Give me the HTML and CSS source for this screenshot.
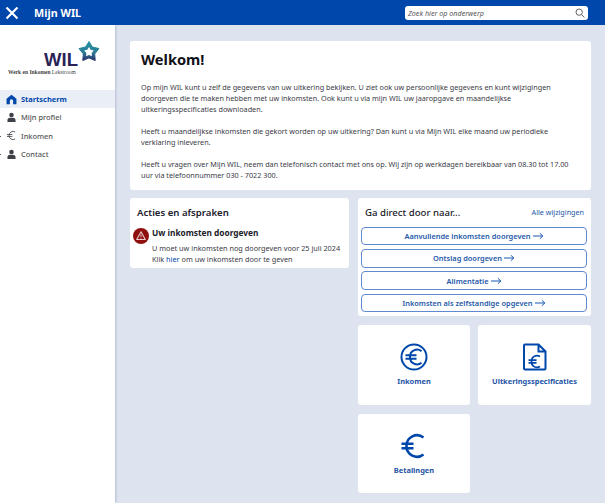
FILE: index.html
```html
<!DOCTYPE html>
<html lang="nl">
<head>
<meta charset="utf-8">
<title>Mijn WIL</title>
<link rel="stylesheet" href="styles.css">
</head>
<body>
<header class="topbar">
  <svg class="close" viewBox="0 0 14 14"><path d="M1.500 1.500l11 11M12.500 1.500l-11 11"/></svg>
  <span class="app-title">Mijn WIL</span>
  <div class="search">
    <span class="search-text">Zoek hier op onderwerp</span>
    <svg class="search-icon" viewBox="0 0 12 12"><circle cx="5" cy="5" r="3.800"/><path d="M7.800 7.800l3.400 3.400"/></svg>
  </div>
</header>
<div class="shell">
  <aside class="sidebar">
    <div class="logo">
      <div class="logo-top">
        <span class="logo-wil">WIL</span>
        <svg class="logo-star" viewBox="0 0 22 22">
          <defs><linearGradient id="star" x1="0" y1="0" x2="0" y2="1"><stop offset="0" stop-color="#1f8fa0"/><stop offset=".55" stop-color="#2a7f96"/><stop offset="1" stop-color="#2a2f6e"/></linearGradient></defs>
          <path fill="url(#star)" stroke="url(#star)" stroke-linejoin="round" d="M11 1.500l3.300 5.400 6.700 1.700-4.300 5.300.5 6.600-6.200-2.600-6.200 2.600.5-6.600L1 8.600l6.700-1.700z"/>
          <path fill="#fff" d="M11 7l1.700 2.700 3.100.9-2.100 2.400.2 3.200-2.900-1.200-2.900 1.200.2-3.200-2.100-2.400 3.100-.9z"/>
        </svg>
      </div>
      <div class="logo-sub"><b>Werk en Inkomen</b> Lekstroom</div>
    </div>
    <nav class="nav">
      <a class="nav-item active">
        <svg class="nav-icon" viewBox="0 0 12 12"><path class="fill-blue" d="M6 .8L.6 5.200v6h3.600V7.600a1.800 1.800 0 0 1 3.600 0v3.600h3.600v-6z"/></svg>Startscherm</a>
      <a class="nav-item">
        <svg class="nav-icon" viewBox="0 0 12 12"><circle class="fill-grey" cx="6" cy="3.200" r="2.500"/><path class="fill-grey" d="M1.600 11V8.600C1.600 7 3 6.300 6 6.300s4.400.7 4.400 2.300V11z"/></svg>Mijn profiel</a>
      <a class="nav-item has-sub">
        <svg class="nav-icon" viewBox="0 0 12 12"><path class="line-grey" d="M10 2.200A4.300 4.300 0 0 0 3.400 6a4.300 4.300 0 0 0 6.600 3.800M1 4.900h6M1 7h6"/></svg>Inkomen</a>
      <a class="nav-item has-sub">
        <svg class="nav-icon" viewBox="0 0 12 12"><circle class="fill-grey" cx="6" cy="3.200" r="2.500"/><path class="fill-grey" d="M1.600 11V8.600C1.600 7 3 6.300 6 6.300s4.400.7 4.400 2.300V11z"/></svg>Contact</a>
    </nav>
  </aside>
  <main class="content">
    <section class="card welcome">
      <h1>Welkom!</h1>
      <p>Op mijn WIL kunt u zelf de gegevens van uw uitkering bekijken. U ziet ook uw persoonlijke gegevens en kunt wijzigingen<br>doorgeven die te maken hebben met uw inkomsten. Ook kunt u via mijn WIL uw jaaropgave en maandelijkse<br>uitkeringsspecificaties downloaden.</p>
      <p>Heeft u maandelijkse inkomsten die gekort worden op uw uitkering? Dan kunt u via Mijn WIL elke maand uw periodieke<br>verklaring inleveren.</p>
      <p>Heeft u vragen over Mijn WIL, neem dan telefonisch contact met ons op. Wij zijn op werkdagen bereikbaar van 08.30 tot 17.00<br>uur via telefoonnummer 030 - 7022 300.</p>
    </section>
    <div class="columns">
      <section class="card actions">
        <h2>Acties en afspraken</h2>
        <div class="action">
          <svg class="alert" viewBox="0 0 16 16"><circle cx="8" cy="8" r="8" fill="#8f0f0f"/><path d="M8 3.800L12.300 11.500H3.700z" fill="none" stroke="#e8c9c9" stroke-width="1.100" stroke-linejoin="round"/><path d="M8 6.500v2.500M8 9.800v.8" stroke="#e8c9c9"/></svg>
          <div>
            <h3>Uw inkomsten doorgeven</h3>
            <p>U moet uw inkomsten nog doorgeven voor 25 juli 2024<br>Klik <a>hier</a> om uw inkomsten door te geven</p>
          </div>
        </div>
      </section>
      <div class="right">
        <section class="card direct">
          <div class="direct-head">
            <h2>Ga direct door naar...</h2>
            <a class="all">Alle wijzigingen</a>
          </div>
          <a class="btn">Aanvullende inkomsten doorgeven<svg viewBox="0 0 12 8"><path d="M0 4h10.500M7.500 1l3.200 3-3.200 3"/></svg></a>
          <a class="btn">Ontslag doorgeven<svg viewBox="0 0 12 8"><path d="M0 4h10.500M7.500 1l3.200 3-3.200 3"/></svg></a>
          <a class="btn">Alimentatie<svg viewBox="0 0 12 8"><path d="M0 4h10.500M7.500 1l3.200 3-3.200 3"/></svg></a>
          <a class="btn">Inkomsten als zelfstandige opgeven<svg viewBox="0 0 12 8"><path d="M0 4h10.500M7.500 1l3.200 3-3.200 3"/></svg></a>
        </section>
        <div class="tiles">
          <a class="card tile">
            <svg class="tile-icon" viewBox="0 0 28 28"><circle cx="14" cy="14" r="12.500"/><path d="M21.500 8.300A7 7 0 0 0 10 14a7 7 0 0 0 11.500 5.700M5.500 12.300h11M5.500 15.700h11"/></svg>
            <span>Inkomen</span>
          </a>
          <a class="card tile">
            <svg class="tile-icon" viewBox="0 0 28 28"><path d="M4 1.500h13.500l7 7v17a1 1 0 0 1-1 1H4a1 1 0 0 1-1-1v-23a1 1 0 0 1 1-1zM17.500 1.500v7h7"/><path class="thin" d="M19 13.500a5.500 5.500 0 0 0-8.500 5 5.500 5.500 0 0 0 8.500 5M7.500 17.200h8M7.500 19.800h8"/></svg>
            <span>Uitkeringsspecificaties</span>
          </a>
          <a class="card tile short">
            <svg class="tile-icon euro" viewBox="0 0 28 28"><path d="M23.500 5.500A10.500 10.500 0 0 0 6.500 14a10.500 10.500 0 0 0 17 8.500M1.500 11.800h12M1.500 16.200h12"/></svg>
            <span>Betalingen</span>
          </a>
        </div>
      </div>
    </div>
  </main>
</div>
</body>
</html>
```
FILE: styles.css
```css
* { box-sizing: border-box; }
html, body { margin: 0; height: 100%; overflow: hidden; }
body { font-family: "Noto Sans", "Open Sans", sans-serif; background: #dde3ef; color: #3a3a46; display: flex; flex-direction: column; }
.topbar { height: 25px; flex: none; background: #0047ab; display: flex; align-items: center; padding: 0 5px; color: #fff; position: relative; z-index: 1; }
.close { width: 14px; height: 14px; fill: none; stroke: #fff; stroke-width: 2.200; }
.app-title { margin-left: 15px; font-size: 10.800px; font-weight: 700; }
.search { margin-left: auto; margin-right: 12px; width: 183px; height: 14px; background: #fff; border-radius: 3px; display: flex; align-items: center; justify-content: space-between; padding: 0 3px; }
.search-text { font-size: 7.200px; font-style: italic; color: #555; }
.search-icon { width: 10px; height: 10px; fill: none; stroke: #555; stroke-width: 1.100; }
.shell { flex: 1; display: flex; min-height: 0; }
.sidebar { width: 115px; flex: none; background: #fff; box-shadow: 1px 0 2px #b4bdd2; padding-top: 14px; }
.logo { height: 51px; padding-left: 8px; }
.logo-top { display: flex; justify-content: flex-end; padding-right: 16px; height: 28px; align-items: flex-end; }
.logo-wil { font-family: "Liberation Sans", sans-serif; font-size: 18.500px; font-weight: 700; line-height: 14px; color: #2a2456; }
.logo-star { width: 22px; height: 22px; margin: 0 -1px 5px 0; }
.logo-sub { font-family: "Liberation Serif", serif; font-size: 5.500px; line-height: 10px; color: #444; white-space: nowrap; }
.nav { display: flex; flex-direction: column; }
.nav-item { height: 18.300px; display: flex; align-items: center; padding-left: 6px; font-size: 7.450px; font-weight: 500; color: #555; position: relative; }
.nav-item.active { background: #e9eef7; color: #0047ab; font-weight: 700; }
.has-sub::before { content: ""; position: absolute; left: 0; top: 9px; width: 1px; height: 1px; background: #555; }
.nav-icon { width: 11px; height: 11px; margin-right: 4px; }
.fill-blue { fill: #0047ab; }
.fill-grey { fill: #3d4046; }
.line-grey { fill: none; stroke: #3d4046; stroke-width: .9; }
.content { flex: 1; min-width: 0; padding: 16px 14px 0 15px; display: flex; flex-direction: column; gap: 8px; }
.card { background: #fff; border-radius: 3px; }
.welcome { height: 149px; padding: 9px 11px; font-size: 7.250px; line-height: 11px; flex: none; }
h1 { margin: 0 0 13px; font-size: 14.600px; line-height: 19px; font-weight: 700; color: #101018; }
.welcome p { margin: 0 0 11px; white-space: nowrap; }
.columns { display: flex; gap: 9px; align-items: flex-start; }
h2 { margin: 0; font-size: 9.600px; font-weight: 600; color: #20202a; line-height: 14px; }
.actions { width: 219px; height: 70px; padding: 8px 7px; }
.action { display: flex; gap: 3px; margin: 7px 0 0 -4px; }
.alert { width: 16px; height: 16px; flex: none; margin-top: 1px; }
h3 { margin: 0; font-size: 8.300px; line-height: 12px; font-weight: 700; color: #20202a; }
.action p { margin: 4px 0 0; font-size: 7.300px; line-height: 10.500px; white-space: nowrap; }
.action a { color: #0047ab; }
.right { flex: 1; min-width: 0; display: flex; flex-direction: column; gap: 9px; }
.direct { height: 118px; padding: 8px 4px 3px 3px; display: flex; flex-direction: column; gap: 3.800px; }
.direct-head { display: flex; justify-content: space-between; align-items: flex-start; padding: 0 3px 0 4px; height: 17px; }
.direct-head h2 { font-weight: 500; }
.all { font-size: 7.200px; color: #2458a8; line-height: 12px; }
.btn { height: 18.500px; flex: none; border: 1px solid #5f8ad0; border-radius: 4px; display: flex; align-items: center; justify-content: center; font-size: 7.400px; font-weight: 600; color: #2458a8; }
.btn svg { width: 11px; height: 8px; margin-left: 2px; fill: none; stroke: #0047ab; stroke-width: 1; }
.tiles { display: grid; grid-template-columns: 112px 113px; gap: 9px 8px; }
.tile { height: 80px; display: flex; flex-direction: column; align-items: center; padding-top: 18px; }
.tile.short { height: 79px; }
.tile-icon { width: 28px; height: 28px; fill: none; stroke: #0047ab; stroke-width: 2; }
.tile-icon .thin { stroke-width: 1.700; }
.tile-icon.euro { stroke-width: 2.600; }
.tile span { margin-top: 5px; font-size: 7.450px; font-weight: 700; color: #1f55a8; line-height: 11px; }
```
